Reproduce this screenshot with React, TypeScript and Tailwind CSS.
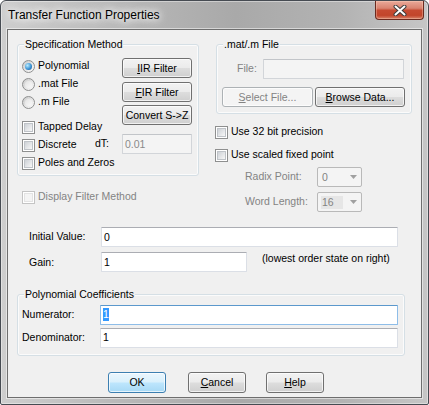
import React from 'react';

type Kids = { children?: React.ReactNode; className?: string };

// classic Win7 push button
const Btn = ({ children, className = '', isDefault, disabled }: Kids & { isDefault?: boolean; disabled?: boolean }) => {
  let look = 'border-[#707070] bg-[linear-gradient(#f2f2f2_0%,#ebebeb_49%,#dddddd_51%,#cfcfcf_100%)] text-black';
  if (isDefault) look = 'border-[#3c7fb1] bg-[linear-gradient(#eaf6fd_0%,#d9f0fc_49%,#bee6fd_51%,#a7d9f5_100%)] text-black';
  if (disabled) look = 'border-[#adb2b5] bg-[#f4f4f4] text-[#838383]';
  return (
    <div className={`flex items-center justify-center rounded-[3px] border leading-[13px] shadow-[inset_0_0_0_1px_rgba(255,255,255,0.7)] ${look} ${className}`}>
      {children}
    </div>
  );
};

const Check = ({ disabled }: { disabled?: boolean }) => (
  <div className={`w-[13px] h-[13px] shrink-0 border p-[1px] bg-white ${disabled ? 'border-[#c4c4c4]' : 'border-[#8e8f8f]'}`}>
    <div
      className={`w-full h-full border ${
        disabled ? 'border-[#e3e3e3] bg-[#f4f4f4]' : 'border-[#bfc3c8] bg-[linear-gradient(135deg,#cdd1d6,#f7f7f7)]'
      }`}
    />
  </div>
);

const Radio = ({ checked }: { checked?: boolean }) => (
  <div className="w-[13px] h-[13px] shrink-0 rounded-full border border-[#8e8f8f] bg-[linear-gradient(135deg,#c9c9c9,#fdfdfd)] flex items-center justify-center">
    <div
      className={`w-[7px] h-[7px] rounded-full ${
        checked
          ? 'bg-[radial-gradient(circle_at_35%_35%,#b9ecff,#3d95d6_55%,#17488a)]'
          : 'bg-[linear-gradient(135deg,#e2e2e2,#fafafa)]'
      }`}
    />
  </div>
);

const Row = ({ children, className = '' }: Kids) => (
  <div className={`h-[18px] flex items-center gap-[3px] ${className}`}>{children}</div>
);

const Field = ({ children, className = '', disabled, focused }: Kids & { disabled?: boolean; focused?: boolean }) => {
  let look = 'bg-white border-[#dbdfe6] border-t-[#abadb3] text-black';
  if (focused) look = 'bg-white border-[#8ebde8] border-t-[#5b98cc] text-black';
  if (disabled) look = 'bg-[#f4f4f4] border-[#d2d5d9] border-t-[#c2c5c9] text-[#8a8a8a]';
  return (
    <div className={`h-[20px] flex items-center px-[2px] border rounded-[1px] leading-[13px] ${look} ${className}`}>{children}</div>
  );
};

const Combo = ({ value, shade }: { value: string; shade?: boolean }) => (
  <div className="w-[45px] h-[20px] flex items-center pl-[3px] pr-[4px] border border-[#b9b9b9] rounded-[2px] bg-[#f4f4f4] text-[#838383] leading-[13px]">
    <span className={shade ? 'w-[22px] bg-[#e6e6e6] pl-[1px]' : 'pl-[1px]'}>{value}</span>
    <svg className="ml-auto" width="7" height="4" viewBox="0 0 7 4">
      <path d="M0 0h7L3.5 4z" fill="#a0a0a0" />
    </svg>
  </div>
);

const Group = ({ legend, children, className = '' }: Kids & { legend: string }) => (
  <div className={`relative border border-[#d5dfe5] rounded-[3px] shadow-[inset_0_0_0_1px_#fbfbfb] ${className}`}>
    <span className="absolute left-[6px] top-[-7px] px-[1px] bg-[#f0f0f0] leading-[13px] text-black">{legend}</span>
    {children}
  </div>
);

const App: React.FC = () => {
  return (
    <div className="w-[429px] h-[405px] flex flex-col rounded-t-[6px] rounded-b-[2px] border border-[#464b52] bg-[linear-gradient(90deg,#cecece_0%,#bababa_25%,#a9a9a9_55%,#b3b3b3_80%,#c6c6c6_100%)] shadow-[inset_0_0_0_1px_rgba(255,255,255,0.4)] font-['Liberation_Sans',Arial,sans-serif] text-[10.5px] text-black">
      {/* Title bar */}
      <div className="h-[28px] flex items-start justify-between shrink-0">
        <div className="pl-[7px] pt-[7px] text-[12px] leading-[15px] text-black [text-shadow:0_0_6px_#fff,0_0_10px_#fff,0_0_14px_#fff]">
          Transfer Function Properties
        </div>
        <div className="mr-[4px] w-[49px] h-[19px] flex items-center justify-center rounded-b-[4px] border border-t-0 border-[#6b2a1f] bg-[linear-gradient(#eaa999_0%,#d98370_40%,#c64a31_52%,#c2452b_80%,#d9836a_100%)] shadow-[inset_0_0_0_1px_rgba(255,220,200,0.35)]">
          <svg width="14" height="11" viewBox="0 0 14 11">
            <path d="M2.5 1.5L11.5 9.5M11.5 1.5L2.5 9.5" stroke="#3b3b3b" strokeWidth="4" strokeLinecap="round" />
            <path d="M2.5 1.5L11.5 9.5M11.5 1.5L2.5 9.5" stroke="#ffffff" strokeWidth="2" strokeLinecap="round" />
          </svg>
        </div>
      </div>

      {/* Client area */}
      <div className="mx-[6px] mb-[6px] flex-1 flex flex-col border border-[#6e6e6e] bg-[#f0f0f0] shadow-[0_0_0_1px_rgba(255,255,255,0.5)]">
        <div className="flex">
          {/* left column */}
          <div className="ml-[9px] mt-[14px] w-[182px] flex flex-col">
            <Group legend="Specification Method" className="h-[132px] flex">
              <div className="w-[77px] pl-[4px] pt-[12px] flex flex-col">
                <Row><Radio checked /><span>Polynomial</span></Row>
                <Row><Radio /><span>.mat File</span></Row>
                <Row><Radio /><span>.m File</span></Row>
                <Row className="mt-[7px]"><Check /><span className="whitespace-nowrap">Tapped Delay</span></Row>
                <Row><Check /><span>Discrete</span></Row>
                <Row><Check /><span className="whitespace-nowrap">Poles and Zeros</span></Row>
              </div>
              <div className="w-[97px] pt-[13px] flex flex-col items-end">
                <Btn className="w-[70px] h-[20px]"><span><span className="underline">I</span>IR Filter</span></Btn>
                <Btn className="w-[70px] h-[20px] mt-[4px]"><span><span className="underline">F</span>IR Filter</span></Btn>
                <Btn className="w-[70px] h-[20px] mt-[3px]">Convert S-&gt;Z</Btn>
                <div className="w-full mt-[9px] flex items-center justify-between">
                  <span>dT:</span>
                  <Field disabled className="w-[70px]">0.01</Field>
                </div>
              </div>
            </Group>
            <Row className="mt-[12px] pl-[5px] text-[#838383]">
              <Check disabled />
              <span>Display Filter Method</span>
            </Row>
          </div>

          {/* right column */}
          <div className="ml-[16px] mt-[14px] w-[197px] flex flex-col">
            <Group legend=".mat/.m File" className="ml-[1px] w-[196px] h-[70px]">
              <div className="pt-[14px] pl-[20px] pr-[7px] flex items-center">
                <span className="text-[#838383]">File:</span>
                <Field disabled className="ml-auto w-[141px]" />
              </div>
              <div className="mt-[8px] pl-[5px] flex gap-[2px]">
                <Btn disabled className="w-[91px] h-[20px]"><span><span className="underline">S</span>elect File...</span></Btn>
                <Btn className="w-[90px] h-[20px]"><span><span className="underline">B</span>rowse Data...</span></Btn>
              </div>
            </Group>
            <Row className="mt-[9px]"><Check /><span>Use 32 bit precision</span></Row>
            <Row className="mt-[5px]"><Check /><span>Use scaled fixed point</span></Row>
            <div className="mt-[3px] pl-[30px] flex items-center text-[#838383]">
              <span className="w-[72px]">Radix Point:</span>
              <Combo value="0" />
            </div>
            <div className="mt-[5px] pl-[30px] flex items-center text-[#838383]">
              <span className="w-[72px]">Word Length:</span>
              <Combo value="16" shade />
            </div>
          </div>
        </div>

        {/* initial value / gain */}
        <div className="mt-[15px] flex items-center">
          <span className="w-[93px] pl-[21px]">Initial Value:</span>
          <Field className="w-[297px]">0</Field>
        </div>
        <div className="mt-[4px] flex items-center">
          <span className="w-[93px] pl-[21px]">Gain:</span>
          <Field className="w-[146px]">1</Field>
          <span className="ml-[15px] mb-[7px] whitespace-nowrap">(lowest order state on right)</span>
        </div>

        {/* polynomial coefficients */}
        <Group legend="Polynomial Coefficients" className="mt-[20px] ml-[9px] w-[388px] h-[62px]">
          <div className="pt-[10px] pl-[4px] flex items-center">
            <span className="w-[78px]">Numerator:</span>
            <Field focused className="w-[298px]">
              <span className="bg-[#3399ff] text-white">1</span>
            </Field>
          </div>
          <div className="mt-[3px] pl-[4px] flex items-center">
            <span className="w-[78px]">Denominator:</span>
            <Field className="w-[298px]">1</Field>
          </div>
        </Group>

        {/* dialog buttons */}
        <div className="mt-[16px] flex">
          <Btn isDefault className="ml-[100px] w-[58px] h-[21px]">OK</Btn>
          <Btn className="ml-[22px] w-[58px] h-[21px]"><span><span className="underline">C</span>ancel</span></Btn>
          <Btn className="ml-[20px] w-[58px] h-[21px]"><span><span className="underline">H</span>elp</span></Btn>
        </div>
      </div>
    </div>
  );
};

export default App;
